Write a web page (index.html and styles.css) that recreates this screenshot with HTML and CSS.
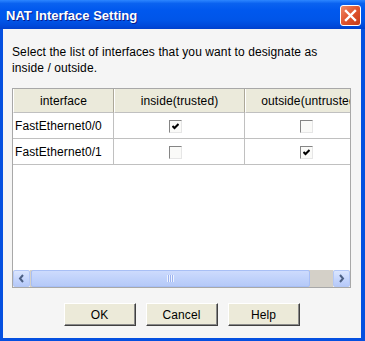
FILE: index.html
```html
<!DOCTYPE html>
<html lang="en">
<head>
    <meta charset="UTF-8">
    <title>NAT Interface Setting</title>
    <link rel="stylesheet" href="styles.css">
</head>
<body>
    <div class="window">
        <div class="titlebar">
            <span class="title">NAT Interface Setting</span>
            <span class="close">
                <svg width="13" height="13" viewBox="0 0 13 13">
                    <path d="M2 2 L11 11 M11 2 L2 11" stroke="#fff" stroke-width="2.4" stroke-linecap="square"/>
                </svg>
            </span>
        </div>

        <div class="client">
            <p class="prompt">Select the list of interfaces that you want to designate as<br>inside / outside.</p>

            <div class="scrollpane">
                <div class="viewport">
                    <table class="grid">
                        <colgroup>
                            <col class="col-name">
                            <col class="col-check">
                            <col class="col-check">
                        </colgroup>
                        <thead>
                            <tr>
                                <th>interface</th>
                                <th>inside(trusted)</th>
                                <th>outside(untrusted)</th>
                            </tr>
                        </thead>
                        <tbody>
                            <tr>
                                <td>FastEthernet0/0</td>
                                <td class="check-cell"><span class="checkbox checked"><svg width="7" height="7" viewBox="0 0 7 7"><path d="M0.5 3 L2.5 5 L6.5 1" fill="none" stroke="#000" stroke-width="2"/></svg></span></td>
                                <td class="check-cell"><span class="checkbox"></span></td>
                            </tr>
                            <tr>
                                <td>FastEthernet0/1</td>
                                <td class="check-cell"><span class="checkbox"></span></td>
                                <td class="check-cell"><span class="checkbox checked"><svg width="7" height="7" viewBox="0 0 7 7"><path d="M0.5 3 L2.5 5 L6.5 1" fill="none" stroke="#000" stroke-width="2"/></svg></span></td>
                            </tr>
                        </tbody>
                    </table>
                </div>

                <div class="hscroll">
                    <span class="sb-btn">
                        <svg width="7" height="9" viewBox="0 0 7 9"><path d="M5 1 L2 4.5 L5 8" fill="none" stroke="#4d6185" stroke-width="2"/></svg>
                    </span>
                    <span class="sb-track">
                        <span class="sb-thumb"><span class="grip"></span></span>
                    </span>
                    <span class="sb-btn">
                        <svg width="7" height="9" viewBox="0 0 7 9"><path d="M2 1 L5 4.5 L2 8" fill="none" stroke="#4d6185" stroke-width="2"/></svg>
                    </span>
                </div>
            </div>

            <div class="buttons">
                <button class="btn">OK</button>
                <button class="btn">Cancel</button>
                <button class="btn">Help</button>
            </div>
        </div>
    </div>
</body>
</html>
```

FILE: styles.css
```css
body {
    margin: 0;
    font-family: 'Liberation Sans', Arial, sans-serif;
    font-size: 12px;
    color: #000;
}
.window {
    width: 365px;
    height: 341px;
    display: flex;
    flex-direction: column;
    background-color: #0550e0;
}
.titlebar {
    height: 29px;
    display: flex;
    align-items: center;
    justify-content: space-between;
    padding: 0 4px 0 6px;
    background: linear-gradient(to bottom, #2c86ff 0%, #0a62f0 12%, #0058ee 35%, #0055e8 70%, #0049da 90%, #0040cc 100%);
}
.title {
    color: #fff;
    font-weight: bold;
    font-size: 13px;
    text-shadow: 1px 1px #0a1a8a;
    margin-top: 2px;
}
.close {
    width: 19px;
    height: 19px;
    margin-top: 1px;
    display: flex;
    align-items: center;
    justify-content: center;
    border: 1px solid #fff;
    border-radius: 3px;
    background: linear-gradient(135deg, #ef8a68 0%, #e0542e 50%, #c63c18 100%);
}
.client {
    flex: 1;
    margin: 0 4px 3px 3px;
    padding: 15px 10px 0 9px;
    background-color: #f5f5f5;
    display: flex;
    flex-direction: column;
    letter-spacing: 0.1px;
}
.prompt {
    margin: 0 0 12px 0;
    line-height: 16px;
}
.scrollpane {
    height: 198px;
    border: 1px solid #a8a8a8;
    background-color: #fff;
    display: flex;
    flex-direction: column;
}
.viewport {
    flex: 1;
    overflow: hidden;
}
.grid {
    width: 363px;
    table-layout: fixed;
    border-collapse: separate;
    border-spacing: 0;
}
.col-name {
    width: 101px;
}
.col-check {
    width: 131px;
}
.grid th {
    height: 23px;
    padding: 0;
    font-weight: normal;
    text-align: center;
    white-space: nowrap;
    overflow: hidden;
    background-color: #ebeadb;
    border-left: 1px solid #fff;
    border-right: 1px solid #aca899;
    border-bottom: 1px solid #c0c0c0;
}
.grid td {
    height: 25px;
    padding: 0 0 0 2px;
    border-right: 1px solid #c0c0c0;
    border-bottom: 1px solid #c0c0c0;
    white-space: nowrap;
}
.grid td.check-cell {
    text-align: center;
    padding: 0 7px 0 0;
}
.checkbox {
    display: inline-flex;
    align-items: center;
    justify-content: center;
    width: 11px;
    height: 11px;
    vertical-align: middle;
    border: 1px solid;
    border-color: #858585 #e6e6e6 #e6e6e6 #858585;
    background-color: #fafaf8;
}
.hscroll {
    height: 17px;
    display: flex;
    background-color: #f3f1ec;
}
.sb-btn {
    width: 15px;
    height: 15px;
    display: flex;
    align-items: center;
    justify-content: center;
    border: 1px solid #b4c8f6;
    border-radius: 2px;
    background: linear-gradient(to bottom, #dbe6fe 0%, #c3d4fc 60%, #b6c9f8 100%);
}
.sb-track {
    flex: 1;
    display: flex;
    padding-left: 1px;
    background-color: #d4d0c8;
}
.sb-thumb {
    width: 277px;
    height: 15px;
    display: flex;
    align-items: center;
    justify-content: center;
    border: 1px solid #a8bff5;
    border-radius: 2px;
    background: linear-gradient(to bottom, #cddbfd 0%, #c0d2fb 50%, #b5c9f8 100%);
}
.grip {
    width: 7px;
    height: 7px;
    background: repeating-linear-gradient(to right, #eef3ff 0, #eef3ff 1px, #9cb3ef 1px, #9cb3ef 2px);
}
.buttons {
    display: flex;
    justify-content: center;
    gap: 10px;
    margin-top: 15px;
}
.btn {
    width: 72px;
    height: 23px;
    padding: 0;
    font-family: 'Liberation Sans', Arial, sans-serif;
    font-size: 12px;
    letter-spacing: 0.1px;
    color: #000;
    background-color: #ecead9;
    border: 1px solid;
    border-color: #fff #404040 #404040 #fff;
    box-shadow: inset -1px -1px #8a8a8a;
}
```
